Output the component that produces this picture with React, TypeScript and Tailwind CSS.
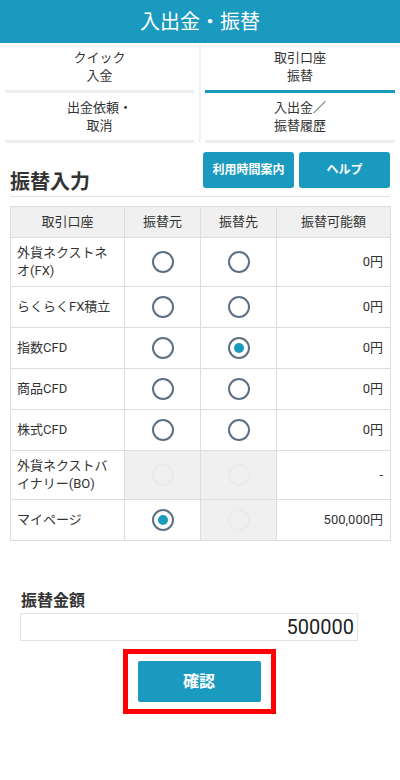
const font = { fontFamily: 'Roboto, "Noto Sans CJK JP", sans-serif' };

type Row = {
  name: string;
  from: 'on' | 'off' | 'disabled';
  to: 'on' | 'off' | 'disabled';
  amount: string;
  tall?: boolean;
};

const rows: Row[] = [
  { name: '外貨ネクストネオ(FX)', from: 'off', to: 'off', amount: '0円', tall: true },
  { name: 'らくらくFX積立', from: 'off', to: 'off', amount: '0円' },
  { name: '指数CFD', from: 'off', to: 'on', amount: '0円' },
  { name: '商品CFD', from: 'off', to: 'off', amount: '0円' },
  { name: '株式CFD', from: 'off', to: 'off', amount: '0円' },
  { name: '外貨ネクストバイナリー(BO)', from: 'disabled', to: 'disabled', amount: '-', tall: true },
  { name: 'マイページ', from: 'on', to: 'disabled', amount: '500,000円' },
];

const Radio = ({ state }: { state: 'on' | 'off' | 'disabled' }) => {
  if (state === 'disabled') {
    return <div className="mx-auto h-[22px] w-[22px] rounded-full border-2 border-[#e9ebeb]" />;
  }
  return (
    <div className="mx-auto flex h-[22px] w-[22px] items-center justify-center rounded-full border-2 border-[#5e7184]">
      {state === 'on' && <div className="h-[10px] w-[10px] rounded-full bg-[#1b9ac0]" />}
    </div>
  );
};

const Tab = ({ label, active }: { label: string[]; active?: boolean }) => (
  <div
    className={`flex h-[50px] flex-col items-center justify-center border-b-[3px] text-[13px] leading-[18px] text-[#333] ${
      active ? 'border-[#1b9ac0]' : 'border-[#eeeeee]'
    }`}
  >
    {label.map((l) => (
      <span key={l}>{l}</span>
    ))}
  </div>
);

export default function App() {
  return (
    <div className="min-h-[780px] w-[400px] bg-white" style={font}>
      {/* Header */}
      <div className="flex h-[43px] items-center justify-center bg-[#1b9ac0] text-[20px] text-white">
        入出金・振替
      </div>

      {/* Tabs */}
      <div className="flex">
        <div className="w-[199px] px-[5px]">
          <Tab label={['クイック', '入金']} />
          <Tab label={['出金依頼・', '取消']} />
        </div>
        <div className="w-[2px] bg-[#f2f2f2]" />
        <div className="flex-1 pl-[4px] pr-[5px]">
          <Tab label={['取引口座', '振替']} active />
          <Tab label={['入出金／', '振替履歴']} />
        </div>
      </div>

      <div className="px-[10px] pt-[9px]">
        {/* Title row */}
        <div className="flex items-end justify-between border-b border-[#dde3e8] pb-[1px]">
          <h2 className="text-[20px] font-bold leading-[26px] text-[#333]">振替入力</h2>
          <div className="flex gap-[5px] pb-[7px]">
            <button className="h-[36px] w-[91px] rounded-[3px] bg-[#1b9ac0] text-[12px] font-bold text-white">
              利用時間案内
            </button>
            <button className="h-[36px] w-[91px] rounded-[3px] bg-[#1b9ac0] text-[12px] font-bold text-white">
              ヘルプ
            </button>
          </div>
        </div>

        {/* Table */}
        <table className="mt-[9px] w-[380px] table-fixed border-collapse text-[13px] text-[#333]">
          <colgroup>
            <col className="w-[114px]" />
            <col className="w-[76px]" />
            <col className="w-[76px]" />
            <col className="w-[114px]" />
          </colgroup>
          <thead>
            <tr className="h-[31px] bg-[#f0f0f0]">
              <th className="border border-[#dddddd] font-normal">取引口座</th>
              <th className="border border-[#dddddd] font-normal">振替元</th>
              <th className="border border-[#dddddd] font-normal">振替先</th>
              <th className="border border-[#dddddd] font-normal">振替可能額</th>
            </tr>
          </thead>
          <tbody>
            {rows.map((r) => (
              <tr key={r.name} className={r.tall ? 'h-[49px]' : 'h-[41px]'}>
                <td className="border border-[#dddddd] py-[6px] pl-[6px] pr-[8px] leading-[18px]">{r.name}</td>
                <td className={`border border-[#dddddd] ${r.from === 'disabled' ? 'bg-[#f0f0f0]' : ''}`}>
                  <Radio state={r.from} />
                </td>
                <td className={`border border-[#dddddd] ${r.to === 'disabled' ? 'bg-[#f0f0f0]' : ''}`}>
                  <Radio state={r.to} />
                </td>
                <td className="border border-[#dddddd] pr-[7px] text-right">{r.amount}</td>
              </tr>
            ))}
          </tbody>
        </table>
      </div>

      {/* Amount */}
      <div className="mt-[49px] px-[20px]">
        <div className="pl-[1px] text-[16px] font-bold leading-[22px] text-[#333]">振替金額</div>
        <div className="mt-[1px] flex h-[28px] w-[338px] items-center justify-end border border-[#dde3e8] pr-[3px] text-[20px] text-[#222]">
          500000
        </div>
      </div>

      {/* Confirm */}
      <div className="mt-[8px] flex justify-center pr-[2px]">
        <div className="border-[5px] border-[#ff0000] px-[10px] py-[7px]">
          <button className="h-[41px] w-[123px] rounded-[2px] bg-[#1b9ac0] text-[16px] font-bold text-white">
            確認
          </button>
        </div>
      </div>
    </div>
  );
}
